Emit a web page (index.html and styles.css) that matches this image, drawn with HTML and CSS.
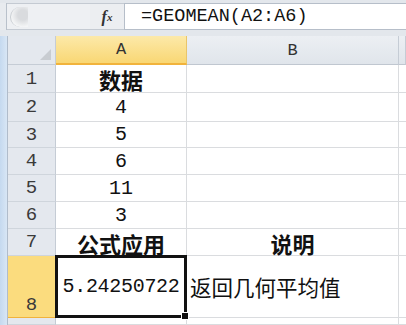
FILE: index.html
```html
<!DOCTYPE html>
<html lang="zh-CN">
<head>
    <meta charset="UTF-8">
    <title>GEOMEAN</title>
    <link rel="stylesheet" href="styles.css">
</head>
<body>
    <div class="window">
        <div class="formula-bar">
            <div class="edge-top"></div>
            <div class="name-box"><span class="knob"></span></div>
            <div class="fx">f<sub>x</sub></div>
            <div class="formula-input">=GEOMEAN(A2:A6)</div>
        </div>
        <div class="sheet-area">
            <div class="edge"></div>
            <div class="sheet">
                <div class="corner"><span class="corner-tri"></span></div>
                <div class="col-head active">A</div>
                <div class="col-head">B</div>
                <div class="col-head rest"></div>

                <div class="row-head">1</div>
                <div class="cell center bold">数据</div>
                <div class="cell"></div>
                <div class="cell rest"></div>

                <div class="row-head">2</div>
                <div class="cell center">4</div>
                <div class="cell"></div>
                <div class="cell rest"></div>

                <div class="row-head">3</div>
                <div class="cell center">5</div>
                <div class="cell"></div>
                <div class="cell rest"></div>

                <div class="row-head">4</div>
                <div class="cell center">6</div>
                <div class="cell"></div>
                <div class="cell rest"></div>

                <div class="row-head">5</div>
                <div class="cell center">11</div>
                <div class="cell"></div>
                <div class="cell rest"></div>

                <div class="row-head">6</div>
                <div class="cell center">3</div>
                <div class="cell"></div>
                <div class="cell rest"></div>

                <div class="row-head">7</div>
                <div class="cell center bold low">公式应用</div>
                <div class="cell center bold low">说明</div>
                <div class="cell rest"></div>

                <div class="row-head active bottom">8</div>
                <div class="cell selected"><span class="num">5.24250722</span><span class="handle"></span></div>
                <div class="cell cjk">返回几何平均值</div>
                <div class="cell rest"></div>

                <div class="row-head"></div>
                <div class="cell"></div>
                <div class="cell"></div>
                <div class="cell rest"></div>
            </div>
        </div>
    </div>
</body>
</html>
```
FILE: styles.css
```css
body {
    margin: 0;
    background: #fff;
    font-family: "Liberation Mono", "Noto Sans CJK SC", monospace;
    overflow: hidden;
}
.window {
    width: 406px;
    height: 325px;
    display: flex;
    flex-direction: column;
    background: #dfe4ea;
    overflow: hidden;
}
.formula-bar {
    height: 36px;
    display: flex;
    align-items: stretch;
    box-sizing: border-box;
    padding: 3px 0 6px 0;
    background: #e3e7ec;
}
.edge-top {
    width: 6px;
    background: #e8ebef;
    border-right: 1px solid #b9c1cb;
}
.name-box {
    width: 80px;
    background: #eef0f3;
    border-top: 1px solid #c4cad2;
    border-bottom: 1px solid #c4cad2;
    display: flex;
    align-items: center;
    padding-left: 3px;
}
.knob {
    width: 17px;
    height: 20px;
    border-radius: 10px 0 0 10px;
    background: radial-gradient(circle at 70% 40%, #d9dbde 30%, #f4f5f6 70%);
    border-left: 1px solid #c9cdd2;
}
.fx {
    width: 34px;
    display: flex;
    align-items: center;
    justify-content: center;
    font-family: "Liberation Serif", serif;
    font-style: italic;
    font-weight: bold;
    font-size: 16px;
    color: #333;
    background: #eceef1;
    border-top: 1px solid #c4cad2;
    border-bottom: 1px solid #c4cad2;
}
.fx sub {
    font-size: 11px;
    vertical-align: -2px;
}
.formula-input {
    flex: 1;
    background: #fff;
    border: 1px solid #b6bec9;
    border-right: none;
    display: flex;
    align-items: center;
    padding-left: 16px;
    font-size: 18.5px;
    color: #111;
}
.sheet-area {
    flex: 1;
    display: flex;
}
.edge {
    width: 7px;
    background: linear-gradient(to right, #c5d9ef, #d8e6f5);
    border-right: 1px solid #b0bccb;
}
.sheet {
    flex: 1;
    display: grid;
    grid-template-columns: 48px 131px 212px 1fr;
    grid-template-rows: 29px 28px 29px 26px 27px 27px 27px 27px 62px 1fr;
    background: #fff;
}
.corner {
    background: #e4e8ee;
    border-right: 1px solid #c5ccd5;
    border-bottom: 1px solid #c5ccd5;
    position: relative;
}
.corner-tri {
    position: absolute;
    right: 4px;
    bottom: 4px;
    width: 0;
    height: 0;
    border-left: 11px solid transparent;
    border-bottom: 11px solid #c8ccd1;
}
.col-head {
    background: linear-gradient(#eceff3, #e0e5eb);
    border-right: 1px solid #c5ccd5;
    border-bottom: 1px solid #c0c7d0;
    display: flex;
    align-items: center;
    justify-content: center;
    font-size: 17px;
    color: #333;
}
.col-head.active {
    background: linear-gradient(#fce9a9, #f9d774);
    border-bottom: 2px solid #f1b33c;
    border-right: 1px solid #e9c56a;
}
.row-head {
    background: #e4e8ee;
    border-right: 1px solid #c5ccd5;
    border-bottom: 1px solid #cfd5dc;
    display: flex;
    align-items: center;
    justify-content: center;
    font-size: 19px;
    color: #3a3a3a;
}
.row-head.active {
    background: #fbdc7e;
    border-bottom: 1px solid #f1b33c;
}
.row-head.bottom {
    align-items: flex-end;
    padding-bottom: 1px;
}
.cell {
    border-right: 1px solid #dadcdf;
    border-bottom: 1px solid #dadcdf;
    display: flex;
    align-items: center;
    font-size: 20px;
    color: #111;
    white-space: nowrap;
    min-width: 0;
}
.cell.rest {
    border-right: none;
}
.center {
    justify-content: center;
}
.bold {
    font-family: "Noto Sans CJK SC", sans-serif;
    font-weight: 700;
    font-size: 22px;
    line-height: 1;
}
.low {
    align-items: flex-end;
    padding-bottom: 1px;
}
.cjk {
    font-family: "Noto Sans CJK SC", sans-serif;
    font-size: 21.5px;
    padding-left: 3px;
    overflow: visible;
}
.selected {
    position: relative;
    border: 3px solid #111;
    margin: -1px 0 0 -1px;
    justify-content: center;
}
.num {
    font-size: 20px;
    letter-spacing: -0.3px;
}
.handle {
    position: absolute;
    right: -5px;
    bottom: -5px;
    width: 6px;
    height: 6px;
    background: #111;
    border: 1px solid #fff;
}
```
